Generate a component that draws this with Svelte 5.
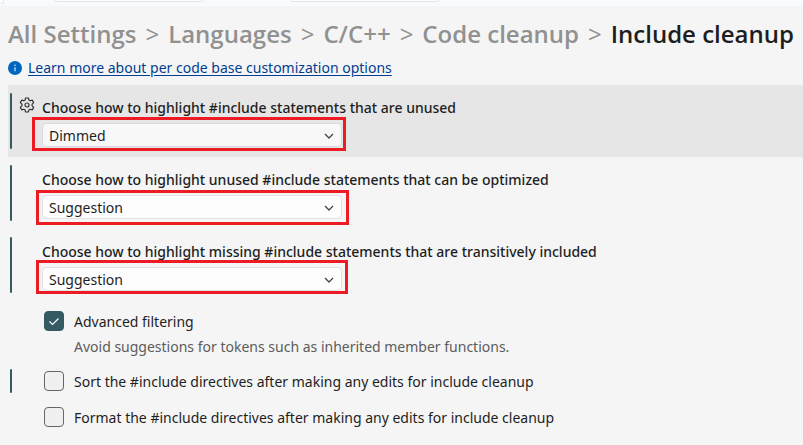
<script>
  const crumbs = ['All Settings', 'Languages', 'C/C++', 'Code cleanup'];
  const levels = ['Dimmed', 'Suggestion', 'Warning', 'Error', 'None'];

  let choices = $state([
    {
      id: 'unused',
      label: 'Choose how to highlight #include statements that are unused',
      value: 'Dimmed',
      active: true
    },
    {
      id: 'optimize',
      label: 'Choose how to highlight unused #include statements that can be optimized',
      value: 'Suggestion'
    },
    {
      id: 'missing',
      label: 'Choose how to highlight missing #include statements that are transitively included',
      value: 'Suggestion'
    }
  ]);

  let toggles = $state([
    {
      id: 'filtering',
      label: 'Advanced filtering',
      hint: 'Avoid suggestions for tokens such as inherited member functions.',
      checked: true
    },
    {
      id: 'sort',
      label: 'Sort the #include directives after making any edits for include cleanup',
      checked: false,
      marked: true
    },
    {
      id: 'format',
      label: 'Format the #include directives after making any edits for include cleanup',
      checked: false
    }
  ]);
</script>

<div class="tab-strip">
  <span class="tab first"></span>
  <span class="tab"></span>
  <span class="tab last"></span>
</div>

<main class="settings">
  <h1 class="crumbs">
    {#each crumbs as crumb}
      <span>{crumb}</span>
      <span class="sep">&gt;</span>
    {/each}
    <span class="current">Include cleanup</span>
  </h1>

  <div class="info">
    <svg width="14" height="14" viewBox="0 0 14 14" aria-hidden="true">
      <circle cx="7" cy="7" r="7" fill="#0067c0" />
      <path d="M7 6.2v4" stroke="#d5e8f8" stroke-width="1.2" />
      <circle cx="7" cy="4.2" r="0.8" fill="#d5e8f8" />
    </svg>
    <a href="#customization">Learn more about per code base customization options</a>
  </div>

  {#each choices as choice (choice.id)}
    <section class="row choice" class:active={choice.active}>
      <span class="bar"></span>
      <div class="gutter">
        {#if choice.active}
          <button class="gear" aria-label="Setting actions">
            <svg width="16" height="16" viewBox="0 0 16 16" fill="none" stroke="#333" stroke-width="1.2" stroke-linejoin="round">
              <path d="M6.6 1h2.8l.5 2.1 1.2.7 2.1-.7 1.5 2.500-1.600 1.600v1.600l1.600 1.600-1.500 2.500-2.100-.7-1.200.7-.6 2.100H6.600l-.5-2.100-1.200-.7-2.100.7-1.500-2.500 1.600-1.600V7.200L1.300 5.600l1.500-2.500 2.100.7 1.200-.7z" />
              <circle cx="8" cy="8" r="2" />
            </svg>
          </button>
        {/if}
      </div>
      <div class="field">
        <label for={choice.id}>{choice.label}</label>
        <div class="select-wrap">
          <select id={choice.id} bind:value={choice.value}>
            {#each levels as level}
              <option>{level}</option>
            {/each}
          </select>
          <svg class="chevron" width="10" height="6" viewBox="0 0 10 6" fill="none" stroke="#444" stroke-width="1.3" aria-hidden="true">
            <path d="M1 1l4 4 4-4" />
          </svg>
        </div>
      </div>
      <span class="callout {choice.id}"></span>
    </section>
  {/each}

  <div class="toggles">
    {#each toggles as toggle (toggle.id)}
      <div class="row toggle">
        {#if toggle.marked}
          <span class="bar"></span>
        {/if}
        <div>
          <label>
            <input type="checkbox" bind:checked={toggle.checked} />
            <span>{toggle.label}</span>
          </label>
          {#if toggle.hint}
            <p>{toggle.hint}</p>
          {/if}
        </div>
      </div>
    {/each}
  </div>
</main>

<style>
  :global(body) {
    background: #f5f5f5;
    color: #1e1e1e;
    font-family: 'Noto Sans', 'Open Sans', sans-serif;
    font-size: 14px;
  }

  .tab-strip {
    display: flex;
    height: 6px;
    background: #f7fbfd;
  }

  .tab {
    box-sizing: border-box;
    flex: none;
    height: 2px;
    width: 148px;
    border: 1px solid #e2e6e8;
    border-top: 0;
    border-radius: 0 0 4px 4px;
    background: #fcfefe;
  }

  .tab.first {
    width: 4px;
    height: 4px;
    margin-right: 51px;
    border-left: 0;
  }

  .tab.last {
    margin-left: 88px;
  }

  .settings {
    padding-left: 8px;
  }

  .crumbs {
    display: flex;
    gap: 9px;
    margin: 0;
    padding-top: 10px;
    color: #919191;
    font-family: 'Open Sans', 'Noto Sans', sans-serif;
    font-size: 24px;
    font-weight: 600;
    line-height: 36px;
    white-space: nowrap;
  }

  .sep {
    font-weight: 400;
  }

  .current {
    color: #1e1e1e;
  }

  .info {
    display: flex;
    align-items: center;
    gap: 6px;
    height: 31px;
    padding-bottom: 2px;
  }

  .info a {
    color: #003e92;
    text-underline-offset: 2px;
  }

  .row {
    position: relative;
    display: flex;
  }

  .bar {
    position: absolute;
    top: 8px;
    bottom: 8px;
    left: 2px;
    width: 2px;
    border-radius: 1px;
    background: #355b62;
  }

  .choice {
    padding: 8px 0 10px;
  }

  .choice.active {
    background: #e6e6e6;
  }

  .gutter {
    flex: none;
    width: 34px;
  }

  .gear {
    display: block;
    margin: 4px 0 0 11px;
    padding: 0;
    border: 0;
    background: none;
  }

  .gear svg {
    display: block;
  }

  .field {
    flex: 1;
  }

  .field label {
    display: block;
    font-weight: 500;
    line-height: 30px;
  }

  .select-wrap {
    position: relative;
    max-width: 300px;
  }

  select {
    display: block;
    box-sizing: border-box;
    width: 100%;
    height: 24px;
    padding: 0 28px 0 6px;
    border: 1px solid #e2e2e2;
    border-radius: 4px;
    appearance: none;
    background: #fdfdfd;
    color: #1e1e1e;
    font: inherit;
  }

  .active select {
    border-color: #d8dade;
    background: #f8f8f8;
  }

  .chevron {
    position: absolute;
    top: 10px;
    right: 8px;
    pointer-events: none;
  }

  .callout {
    position: absolute;
    box-sizing: border-box;
    top: 33px;
    left: 28px;
    width: 313px;
    height: 35px;
    border: 3px solid #ed1c24;
    pointer-events: none;
  }

  .callout.unused {
    top: 32px;
    left: 24px;
    width: 314px;
    height: 34px;
  }

  .callout.missing {
    top: 31px;
    width: 312px;
    height: 34px;
  }

  .toggles {
    padding-top: 2px;
  }

  .toggle {
    padding: 6px 0 6px 36px;
  }

  .toggle .bar {
    top: 6px;
    bottom: 6px;
  }

  .toggle label {
    display: flex;
    align-items: center;
    gap: 10px;
    min-height: 24px;
  }

  .toggle p {
    margin: 4px 0 0 30px;
    color: #5c5c5c;
    line-height: 20px;
  }

  input {
    box-sizing: border-box;
    flex: none;
    width: 20px;
    height: 20px;
    margin: 0;
    border: 1px solid #666;
    border-radius: 4px;
    appearance: none;
    background: #f0f0f0;
  }

  input:checked {
    border-color: #355b62;
    background: #355b62 url("data:image/svg+xml,%3Csvg xmlns='http://www.w3.org/2000/svg' viewBox='0 0 18 18' fill='none' stroke='white' stroke-width='1.2'%3E%3Cpath d='M4.5 9.5l3 3 6-6'/%3E%3C/svg%3E") center / 18px no-repeat;
  }
</style>
